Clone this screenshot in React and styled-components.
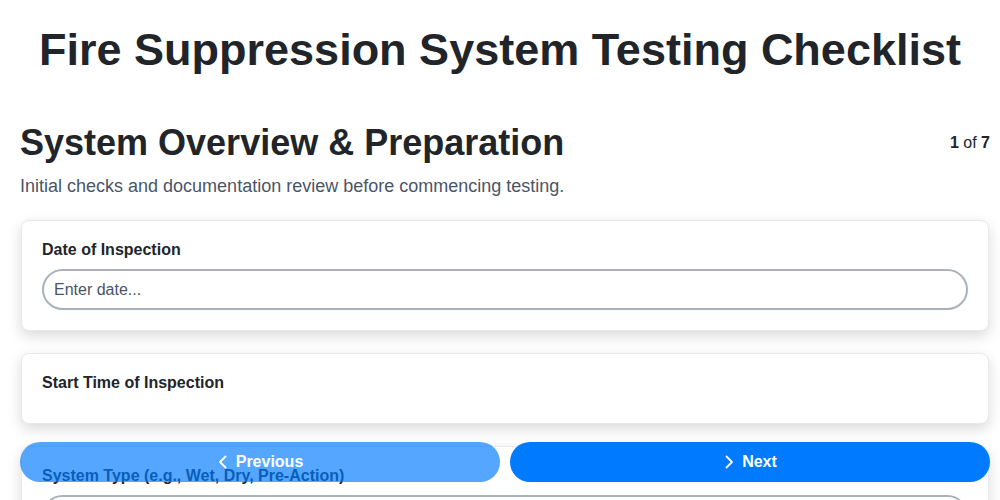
import React from "react";
import styled, { createGlobalStyle } from "styled-components";

const GlobalStyle = createGlobalStyle`
  * { box-sizing: border-box; }
  html, body { margin: 0; padding: 0; background: #ffffff; }
  body {
    font-family: "Liberation Sans", Arial, sans-serif;
    color: #212529;
  }
`;

const Header = styled.header`
  padding: 24px 20px 0;
`;

const Title = styled.h1`
  margin: 0;
  font-size: 45px;
  font-weight: 700;
  text-align: center;
  color: #212529;
  line-height: 1.15;
`;

const Page = styled.main`
  padding: 46px 10px 80px 20px;
`;

const SectionHeader = styled.div`
  display: flex;
  align-items: center;
  justify-content: space-between;
`;

const SectionTitle = styled.h2`
  margin: 0;
  font-size: 36px;
  font-weight: 700;
  line-height: 1.15;
  color: #212529;
`;

const StepCounter = styled.div`
  font-size: 16px;
  color: #212529;
  padding-top: 2px;
  b { font-weight: 700; }
`;

const Description = styled.p`
  margin: 13px 0 23px;
  font-size: 18px;
  line-height: 1.15;
  color: #4a5568;
`;

const Card = styled.div`
  background: #ffffff;
  border: 1px solid #e8e9ee;
  border-radius: 8px;
  box-shadow: 0 5px 14px rgba(0, 0, 0, 0.15);
  padding: 20px 20px 20px;
  margin: 0 1px 22px;
`;

const Label = styled.label`
  display: block;
  font-size: 16px;
  font-weight: 700;
  line-height: 1.15;
  color: #212529;
  margin-bottom: 10px;
`;

const Input = styled.input`
  display: block;
  width: 100%;
  height: 41px;
  padding: 0 10px;
  border: 2px solid #a9b2bb;
  border-radius: 21px;
  font-family: "Liberation Sans", Arial, sans-serif;
  font-size: 16px;
  color: #212529;
  background: #ffffff;
  outline: none;
  &::placeholder { color: #4a5568; opacity: 1; }
`;

const Spacer = styled.div`
  height: 0;
`;

const Footer = styled.div`
  position: fixed;
  left: 20px;
  right: 10px;
  bottom: 18px;
  display: grid;
  grid-template-columns: 1fr 1fr;
  gap: 10px;
`;

const NavButton = styled.button`
  display: flex;
  align-items: center;
  justify-content: center;
  gap: 7px;
  height: 40px;
  border: none;
  border-radius: 20px;
  background: #007bff;
  color: #ffffff;
  font-family: "Liberation Sans", Arial, sans-serif;
  font-size: 16px;
  font-weight: 700;
  opacity: ${(p) => (p.disabled ? 0.67 : 1)};
  cursor: pointer;
  padding: 0;
`;

const Chevron = ({ dir }) => (
  <svg width="12" height="16" viewBox="0 0 12 16" fill="none">
    <polyline
      points={dir === "left" ? "8.5,2.5 3,8 8.5,13.5" : "3.5,2.5 9,8 3.5,13.5"}
      stroke="#ffffff"
      strokeWidth="1.8"
      strokeLinecap="round"
      strokeLinejoin="round"
    />
  </svg>
);

const fields = [
  { label: "Date of Inspection", placeholder: "Enter date..." },
  { label: "Start Time of Inspection", placeholder: null },
  { label: "System Type (e.g., Wet, Dry, Pre-Action)", placeholder: "Enter system type..." },
  { label: "System Location / Zone", placeholder: "Enter location..." },
];

export default function App() {
  return (
    <>
      <GlobalStyle />
      <Header>
        <Title>Fire Suppression System Testing Checklist</Title>
      </Header>
      <Page>
        <SectionHeader>
          <SectionTitle>System Overview &amp; Preparation</SectionTitle>
          <StepCounter>
            <b>1</b> of <b>7</b>
          </StepCounter>
        </SectionHeader>
        <Description>
          Initial checks and documentation review before commencing testing.
        </Description>
        {fields.map((f) => (
          <Card key={f.label}>
            <Label>{f.label}</Label>
            {f.placeholder ? <Input placeholder={f.placeholder} /> : <Spacer />}
          </Card>
        ))}
      </Page>
      <Footer>
        <NavButton disabled>
          <Chevron dir="left" />
          Previous
        </NavButton>
        <NavButton>
          <Chevron dir="right" />
          Next
        </NavButton>
      </Footer>
    </>
  );
}
